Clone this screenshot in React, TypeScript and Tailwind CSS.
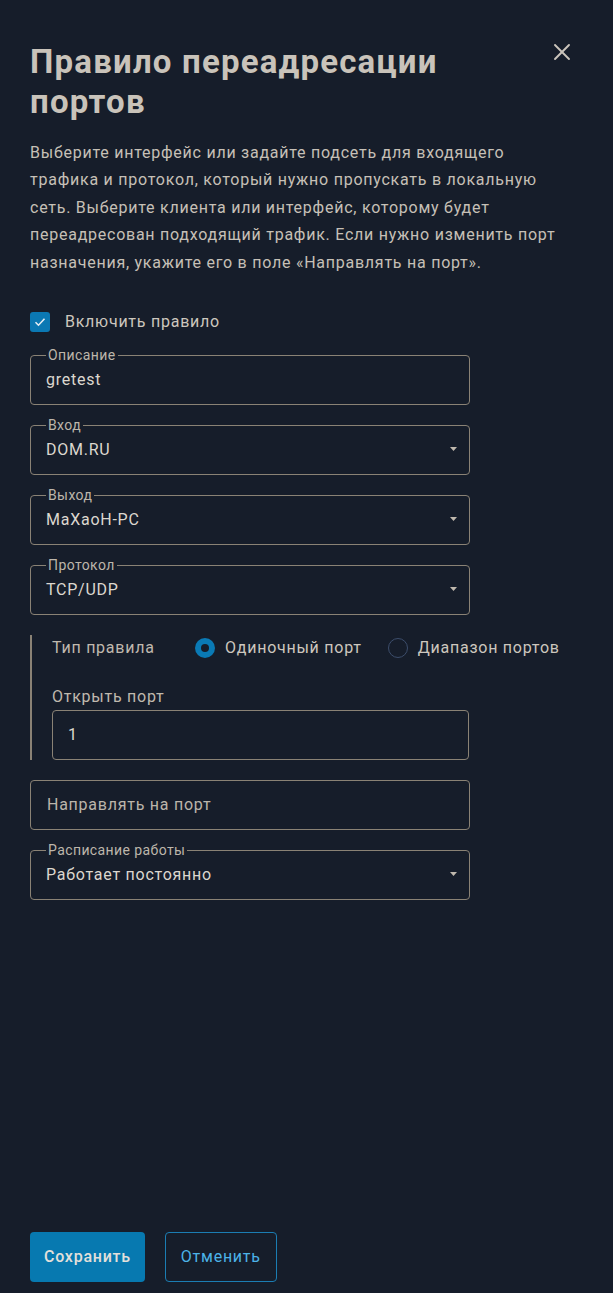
import { X } from "lucide-react";

const line = "border-[#8a8275]";

function Legend({ children }: { children: string }) {
  return (
    <span className="absolute -top-[9px] left-[15px] bg-[#161d2a] px-[2px] text-[14px] leading-[16px] tracking-[0.4px] text-[#bdb6ab]">
      {children}
    </span>
  );
}

function Caret() {
  return (
    <svg width="7" height="4" viewBox="0 0 7 4" className="absolute right-[12px] top-[21px]">
      <path d="M0 0h7L3.5 4z" fill="#c0b9ae" />
    </svg>
  );
}

function Field({ label, value, select }: { label: string; value: string; select?: boolean }) {
  return (
    <div className={`relative h-[50px] w-[440px] rounded-[4px] border ${line}`}>
      <Legend>{label}</Legend>
      <div className="flex h-full items-center pl-[15px] text-[16px] text-[#dcd7cf]">{value}</div>
      {select && <Caret />}
    </div>
  );
}

function Radio({ checked, label }: { checked?: boolean; label: string }) {
  return (
    <label className="flex items-center gap-[10px]">
      {checked ? (
        <span className="flex h-[20px] w-[20px] items-center justify-center rounded-full bg-[#0a7ab5]">
          <span className="h-[8px] w-[8px] rounded-full bg-[#161d2a]" />
        </span>
      ) : (
        <span className="h-[20px] w-[20px] rounded-full border border-[#3c4d6b]" />
      )}
      <span className="text-[16px] text-[#cdc7be]">{label}</span>
    </label>
  );
}

export default function App() {
  return (
    <div className="flex min-h-[1293px] flex-col bg-[#161d2a] px-[30px] pb-[11px] pt-[42px] font-['Roboto',sans-serif] tracking-[0.75px]">
      <div className="flex items-start justify-between">
        <h1 className="max-w-[500px] text-[33px] font-bold leading-[40px] tracking-[1.2px] text-[#c9c3ba]">
          Правило переадресации портов
        </h1>
        <button type="button" className="-mt-[4px] mr-[7px] text-[#cbc5bc]">
          <X size={28} strokeWidth={1.6} />
        </button>
      </div>

      <p className="mt-[17px] max-w-[532px] text-[16px] leading-[27.4px] text-[#c6c0b7]">
        Выберите интерфейс или задайте подсеть для входящего трафика и протокол, который нужно
        пропускать в локальную сеть. Выберите клиента или интерфейс, которому будет переадресован
        подходящий трафик. Если нужно изменить порт назначения, укажите его в поле «Направлять на
        порт».
      </p>

      <label className="mt-[34px] flex items-center gap-[15px]">
        <span className="flex h-[20px] w-[20px] items-center justify-center rounded-[3px] bg-[#0b78b3]">
          <svg width="12" height="10" viewBox="0 0 12 10">
            <path d="M1.5 5.2l3 3 6-6.4" fill="none" stroke="#e6edf3" strokeWidth="1.6" />
          </svg>
        </span>
        <span className="text-[16px] leading-[24px] text-[#cdc7be]">Включить правило</span>
      </label>

      <div className="mt-[21px] flex flex-col gap-[20px]">
        <Field label="Описание" value="gretest" />
        <Field label="Вход" value="DOM.RU" select />
        <Field label="Выход" value="MaXaoH-PC" select />
        <Field label="Протокол" value="TCP/UDP" select />

        <div className={`border-l-2 ${line} pl-[20px] pt-[1px]`}>
          <div className="flex h-[24px] items-center">
            <span className="w-[143px] text-[16px] text-[#c0b9ae]">Тип правила</span>
            <div className="flex items-center gap-[26px]">
              <Radio checked label="Одиночный порт" />
              <Radio label="Диапазон портов" />
            </div>
          </div>
          <div className="mt-[25px] text-[16px] leading-[24px] text-[#c0b9ae]">Открыть порт</div>
          <div className={`mt-[1px] flex h-[50px] w-[417px] items-center rounded-[4px] border ${line} pl-[15px] text-[16px] text-[#dcd7cf]`}>
            1
          </div>
        </div>

        <div className={`flex h-[50px] w-[440px] items-center rounded-[4px] border ${line} pl-[16px] text-[16px] text-[#bcb5aa]`}>
          Направлять на порт
        </div>
        <Field label="Расписание работы" value="Работает постоянно" select />
      </div>

      <div className="mt-auto flex gap-[20px]">
        <button type="button" className="h-[50px] rounded-[4px] bg-[#0779b0] px-[14px] text-[16px] font-medium text-[#e3e0db]">
          Сохранить
        </button>
        <button type="button" className="h-[50px] rounded-[4px] border border-[#1b7db3] px-[15px] text-[16px] text-[#4cb3e8]">
          Отменить
        </button>
      </div>
    </div>
  );
}
